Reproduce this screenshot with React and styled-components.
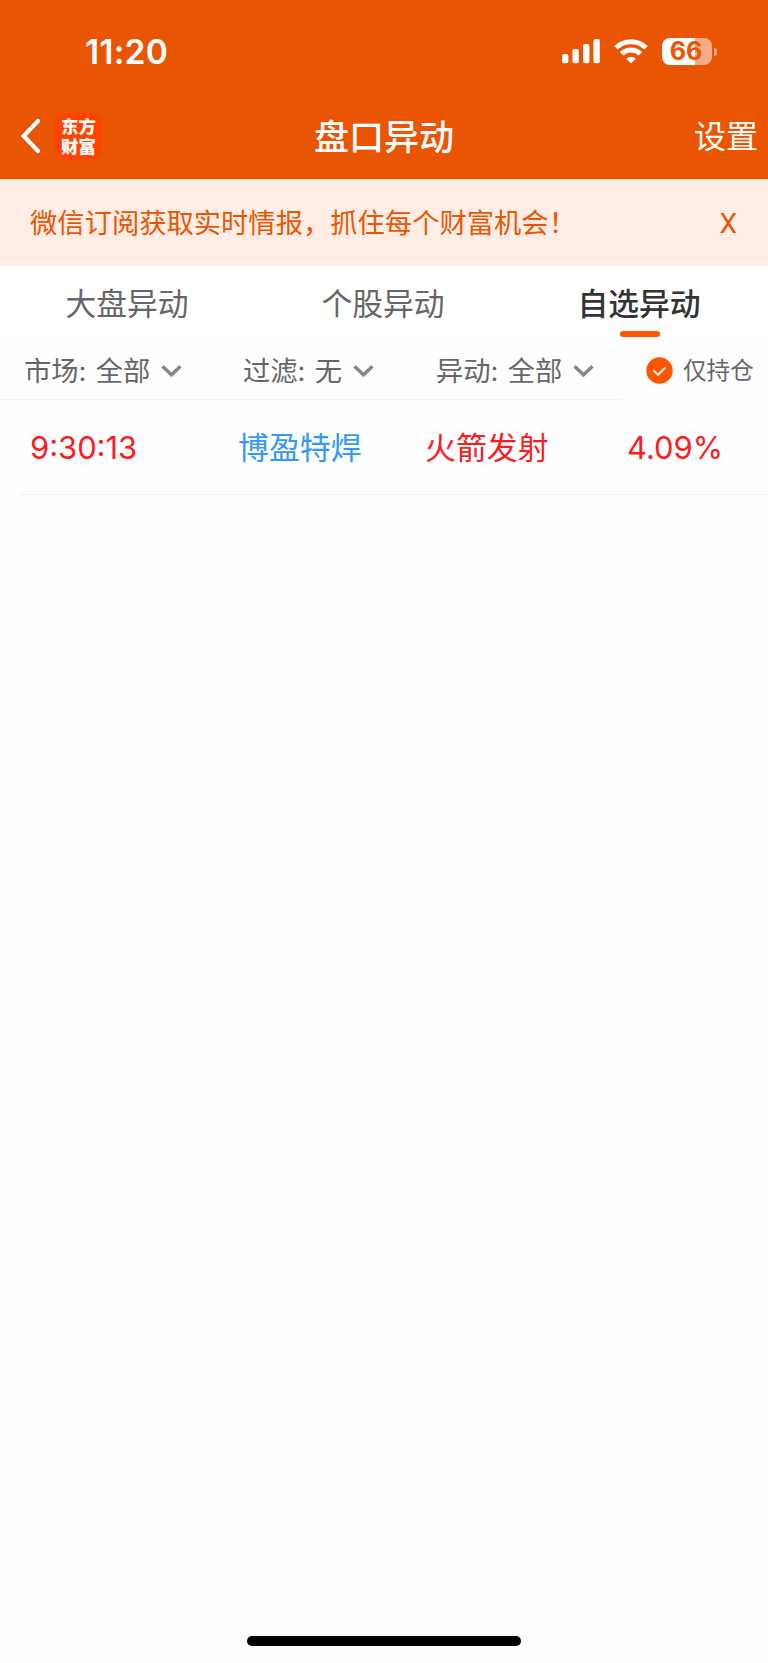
import styled, { createGlobalStyle } from 'styled-components'

const GlobalStyle = createGlobalStyle`
  * {
    box-sizing: border-box;
  }
  body {
    margin: 0;
    background: #fefefe;
    font-family: Inter, 'Noto Sans CJK SC', sans-serif;
    color: #666;
  }
`
const Page = styled.div`
  display: flex;
  flex-direction: column;
  width: 768px;
  height: 1663px;
  overflow: hidden;
`
const Header = styled.header`
  height: 179px;
  background: #ea5504;
  color: #fff;
`
const StatusBar = styled.div`
  display: flex;
  align-items: center;
  height: 96px;
  padding: 7px 51px 0 85px;
`
const Clock = styled.span`
  flex: 1;
  font-size: 33.5px;
  font-weight: 600;
  line-height: 40px;
  letter-spacing: 0.2px;
`
const StatusIcons = styled.div`
  display: flex;
  align-items: center;
  gap: 14px;
`
const Battery = styled.div`
  display: flex;
  align-items: center;
  gap: 2px;
`
const BatteryBody = styled.div`
  width: 50px;
  height: 27px;
  border-radius: 8px;
  background: linear-gradient(to right, #fff ${props => props.$level}%, #f5ab84 ${props => props.$level}%);
  color: #ea5504;
  font-size: 25px;
  font-weight: 700;
  line-height: 27px;
  text-align: center;
  text-indent: -2px;
`
const BatteryTip = styled.div`
  width: 3px;
  height: 8px;
  border-radius: 0 3px 3px 0;
  background: #f5ab84;
`
const NavBar = styled.div`
  display: grid;
  grid-template-columns: 295px 1fr auto;
  align-items: center;
  height: 80px;
  padding: 0 10px 0 19px;
`
const NavLeft = styled.div`
  display: flex;
  align-items: center;
  gap: 15px;
`
const Logo = styled.div`
  display: flex;
  flex-direction: column;
  align-items: center;
  justify-content: center;
  width: 46px;
  height: 47px;
  padding: 0 0 1px 1px;
  border-radius: 9px;
  background: #ff4400;
  font-family: 'Noto Sans CJK SC', sans-serif;
  font-size: 17.4px;
  font-weight: 900;
  line-height: 19.5px;
`
const Title = styled.h1`
  margin: 0;
  padding-top: 2px;
  font-size: 35px;
  font-weight: 500;
  line-height: 50px;
`
const Settings = styled.span`
  padding-top: 2px;
  font-size: 32px;
  line-height: 48px;
`
const Notice = styled.div`
  display: flex;
  justify-content: space-between;
  align-items: center;
  height: 87px;
  padding: 2px 31px 0 30px;
  border-top: 1px solid #f9d9c8;
  background: #fdede5;
  color: #ea5504;
  font-size: 27.3px;
  line-height: 40px;
`
const Close = styled.span`
  font-family: Roboto, sans-serif;
  font-size: 28px;
`
const Tabs = styled.nav`
  display: grid;
  grid-template-columns: repeat(3, 256px);
  height: 76px;
  background: #fff;
`
const Tab = styled.div`
  display: flex;
  flex-direction: column;
  align-items: center;
  padding-top: 15px;
  font-size: 30.8px;
  line-height: 46px;
  color: ${props => (props.$active ? '#333' : '#666')};
  font-weight: ${props => (props.$active ? 500 : 400)};

  &::after {
    content: '';
    width: 40px;
    height: 6px;
    margin-top: 4px;
    border-radius: 3px;
    background: ${props => (props.$active ? '#ff5500' : 'transparent')};
  }
`
const TabLabel = styled.span`
  margin-right: 2px;
`
const Filters = styled.div`
  display: flex;
  height: 58px;
  font-size: 27.3px;
  line-height: 40px;
`
const FilterGroup = styled.div`
  display: grid;
  grid-template-columns: 219px 193px 1fr;
  width: 622px;
  padding: 10px 0 0 24px;
  border-bottom: 1px solid #f3f3f3;
`
const Filter = styled.div`
  display: flex;
  align-items: flex-start;
  white-space: pre;
  word-spacing: 1.5px;

  svg {
    margin: 12px 0 0 11px;
  }
`
const Holding = styled.label`
  display: flex;
  align-items: center;
  gap: 10px;
  height: 40px;
  margin: 8px 0 0 24px;
  font-size: 23.6px;
`
const HoldingText = styled.span`
  padding-top: 2px;
`
const Row = styled.div`
  display: grid;
  grid-template-columns: 208px 187px 202px 1fr;
  align-items: center;
  height: 95px;
  margin-left: 20px;
  padding: 2px 0 0 10px;
  border-bottom: 1px solid #f0f0f0;
  font-size: 30.9px;
  line-height: 46px;
`
const Cell = styled.span`
  color: ${props => props.$color || '#f91d1f'};
`
const HomeIndicator = styled.div`
  width: 274px;
  height: 10px;
  margin: auto auto 17px;
  border-radius: 5px;
  background: #000;
`

const filters = [
  { label: '市场', value: '全部' },
  { label: '过滤', value: '无' },
  { label: '异动', value: '全部' },
]

function SignalIcon() {
  return (
    <svg width="38" height="25" viewBox="0 0 38 25" fill="#fff">
      <rect x="0" y="15" width="6.4" height="9.3" rx="2" />
      <rect x="10.4" y="10" width="6.4" height="14.3" rx="2" />
      <rect x="21" y="5" width="6.4" height="19.3" rx="2" />
      <rect x="31.4" y="0" width="6.4" height="24.3" rx="2" />
    </svg>
  )
}

function WifiIcon() {
  return (
    <svg width="34" height="25" viewBox="0 0 34 25" fill="none" stroke="#fff" strokeWidth="5">
      <path d="M2 8.8a21.6 21.6 0 0 1 30 0" />
      <path d="M7.6 14.8a13.5 13.5 0 0 1 18.8 0" />
      <path d="M17 24.4l-4.8-4.7a7.2 7.2 0 0 1 9.6 0z" fill="#fff" stroke="none" />
    </svg>
  )
}

function BackIcon() {
  return (
    <svg width="21" height="36" viewBox="0 0 21 36" fill="none" stroke="#fff" strokeWidth="4.2" strokeLinecap="round" strokeLinejoin="miter">
      <path d="M19 3L4.7 18 19 33" />
    </svg>
  )
}

function ArrowIcon() {
  return (
    <svg width="21" height="14" viewBox="0 0 21 14" fill="none" stroke="#888" strokeWidth="3.4">
      <path d="M1.5 2.2l9 8.6 9-8.6" />
    </svg>
  )
}

function CheckIcon() {
  return (
    <svg width="27" height="27" viewBox="0 0 27 27" fill="none">
      <circle cx="13.5" cy="13.5" r="13.2" fill="#ff5500" />
      <path d="M8 13.9l4 4 7-7" stroke="#fff" strokeWidth="2" strokeLinecap="round" strokeLinejoin="round" />
    </svg>
  )
}

export default function App() {
  return (
    <Page>
      <GlobalStyle />
      <Header>
        <StatusBar>
          <Clock>11:20</Clock>
          <StatusIcons>
            <SignalIcon />
            <WifiIcon />
            <Battery>
              <BatteryBody $level={66}>66</BatteryBody>
              <BatteryTip />
            </Battery>
          </StatusIcons>
        </StatusBar>
        <NavBar>
          <NavLeft>
            <BackIcon />
            <Logo>
              <span>东方</span>
              <span>财富</span>
            </Logo>
          </NavLeft>
          <Title>盘口异动</Title>
          <Settings>设置</Settings>
        </NavBar>
      </Header>

      <Notice>
        <span>微信订阅获取实时情报，抓住每个财富机会！</span>
        <Close>X</Close>
      </Notice>

      <Tabs>
        <Tab>
          <TabLabel>大盘异动</TabLabel>
        </Tab>
        <Tab>
          <TabLabel>个股异动</TabLabel>
        </Tab>
        <Tab $active>
          <TabLabel>自选异动</TabLabel>
        </Tab>
      </Tabs>

      <Filters>
        <FilterGroup>
          {filters.map(({ label, value }) => (
            <Filter key={label}>
              {label}: {value}
              <ArrowIcon />
            </Filter>
          ))}
        </FilterGroup>
        <Holding>
          <CheckIcon />
          <HoldingText>仅持仓</HoldingText>
        </Holding>
      </Filters>

      <Row>
        <Cell>9:30:13</Cell>
        <Cell $color="#3399f7">博盈特焊</Cell>
        <Cell>火箭发射</Cell>
        <Cell>4.09%</Cell>
      </Row>

      <HomeIndicator />
    </Page>
  )
}
